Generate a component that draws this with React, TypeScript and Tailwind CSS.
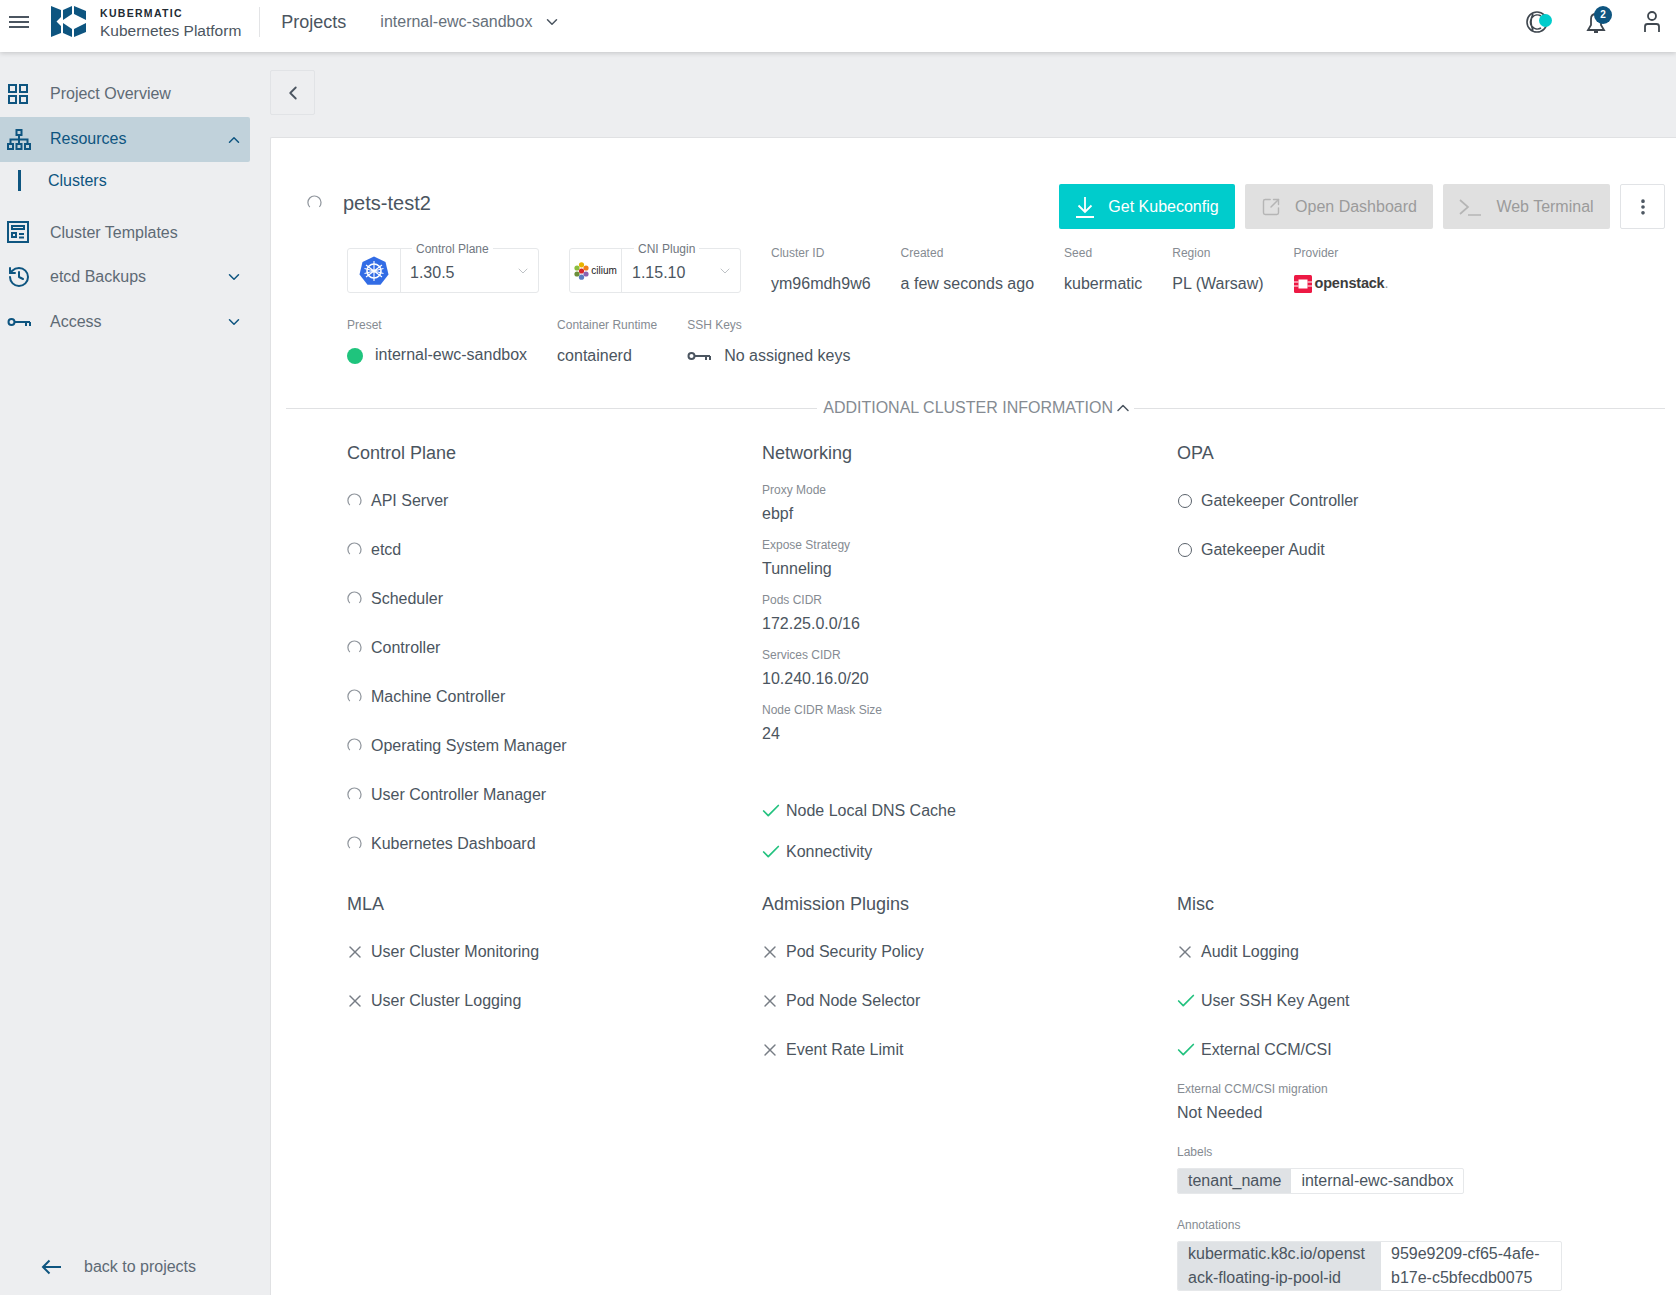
import React from 'react';
import { ChevronDown, ChevronLeft, ChevronUp, Check, EllipsisVertical, History, SquareArrowOutUpRight, X } from 'lucide-react';

const Spinner: React.FC<{ size?: number }> = ({ size = 16 }) => (
  <svg width={size} height={size} viewBox="0 0 16 16" fill="none" className="shrink-0">
    <path d="M3 13A7 7 0 1 1 13.2 12.7" stroke="#8f959c" strokeWidth="1.3" />
  </svg>
);

const Logo = () => (
  <svg width="36" height="31" viewBox="0 0 36 31" fill="#0e5580" className="shrink-0">
    <path d="M0 0L10 4V11L5.5 15.5L10 20V27L0 31Z" />
    <path d="M12 4L21 0V8L12 14Z" />
    <path d="M23 0L35 5V14L23 8Z" />
    <path d="M12 17L21 23V31L12 27Z" />
    <path d="M23 23L35 17V26L23 31Z" />
  </svg>
);

const GridIcon = () => (
  <svg width="22" height="22" viewBox="0 0 22 22" fill="none" stroke="#0e5580" strokeWidth="2">
    <rect x="2" y="2" width="7" height="7" />
    <rect x="13" y="2" width="7" height="7" />
    <rect x="2" y="13" width="7" height="7" />
    <rect x="13" y="13" width="7" height="7" />
  </svg>
);

const TreeIcon = () => (
  <svg width="24" height="22" viewBox="0 0 24 22" fill="none" stroke="#0e5580" strokeWidth="2">
    <rect x="9.5" y="1" width="5" height="5" />
    <rect x="1" y="15" width="5" height="5" />
    <rect x="9.5" y="15" width="5" height="5" />
    <rect x="18" y="15" width="5" height="5" />
    <path d="M12 6V15M3.5 15V10.5H20.5V15" />
  </svg>
);

const TemplateIcon = () => (
  <svg width="22" height="22" viewBox="0 0 22 22" fill="none" stroke="#0e5580" strokeWidth="2">
    <rect x="1" y="1" width="20" height="20" />
    <rect x="5" y="5" width="12" height="3" />
    <rect x="5" y="12" width="4" height="4" />
    <path d="M12 13H17M12 16.5H17" />
  </svg>
);

const KeyIcon: React.FC<{ color?: string }> = ({ color = '#0e5580' }) => (
  <svg width="24" height="10" viewBox="0 0 24 10" fill="none" stroke={color} strokeWidth="2">
    <circle cx="4.5" cy="5" r="3" />
    <path d="M7.5 5H23M19 5V9M23 5V9" />
  </svg>
);

const KubernetesLogo = () => (
  <svg width="30" height="30" viewBox="0 0 30 30" className="shrink-0">
    <path d="M15 0.5L26.5 6L29.5 18.5L21.5 28.8H8.5L0.5 18.5L3.5 6Z" fill="#326ce5" />
    <g fill="none" stroke="#fff">
      <circle cx="15" cy="15" r="7" strokeWidth="1.6" />
      <circle cx="15" cy="15" r="1.6" fill="#fff" strokeWidth="0" />
      <path d="M15 5V25M7 9L23 21M23 9L7 21M5.5 17.5L24.5 12.5M24.5 17.5L5.5 12.5" strokeWidth="1.1" />
    </g>
  </svg>
);

const CiliumLogo = () => (
  <div className="flex items-center gap-[2px]">
    <svg width="15" height="18" viewBox="0 0 15 18">
      <circle cx="7.5" cy="2.8" r="2.6" fill="#e8b400" />
      <circle cx="3" cy="6" r="2.6" fill="#8bbd3e" />
      <circle cx="12" cy="6" r="2.6" fill="#f07d1a" />
      <circle cx="7.5" cy="9" r="2.6" fill="#d7262c" />
      <circle cx="3" cy="12" r="2.6" fill="#6b8f3a" />
      <circle cx="12" cy="12" r="2.6" fill="#8a63b0" />
      <circle cx="7.5" cy="15.2" r="2.6" fill="#5a7cc0" />
    </svg>
    <span className="text-[10px] text-[#222]">cilium</span>
  </div>
);

const OpenstackMark = () => (
  <svg width="18" height="18" viewBox="0 0 18 18" className="shrink-0">
    <rect width="18" height="18" rx="1.5" fill="#ed1944" />
    <rect x="4.5" y="4.5" width="9" height="9" fill="#fff" />
    <path d="M0 7H4.5M0 11H4.5M13.5 7H18M13.5 11H18" stroke="#fff" strokeWidth="1" />
  </svg>
);

const Label: React.FC<{ children: React.ReactNode }> = ({ children }) => (
  <div className="h-4 text-xs leading-4 text-[#858b92] whitespace-nowrap">{children}</div>
);

const Value: React.FC<{ children: React.ReactNode }> = ({ children }) => (
  <div className="h-6 leading-6 whitespace-nowrap">{children}</div>
);

const NavItem: React.FC<{ icon: React.ReactNode; label: string; expand?: 'up' | 'down'; active?: boolean; className?: string; labelClass?: string }> = ({ icon, label, expand, active, className, labelClass }) => (
  <div className={`flex h-[45px] w-[250px] items-center rounded-r-[2px] pl-[7px] pr-[7px] ${active ? 'bg-[#c1d2db] text-[#0e5580]' : 'text-[#5e6a75]'} ${className ?? ''}`}>
    <div className="flex w-[43px] shrink-0 items-center">{icon}</div>
    <span className={labelClass}>{label}</span>
    {expand === 'up' && <ChevronUp size={18} color="#0e5580" className="ml-auto" />}
    {expand === 'down' && <ChevronDown size={18} color="#0e5580" className="ml-auto" />}
  </div>
);

const StatusRow: React.FC<{ kind: 'spin' | 'ok' | 'off' | 'ring'; label: string; rowClass?: string }> = ({ kind, label, rowClass = 'h-[49px]' }) => (
  <div className={`flex items-center ${rowClass}`}>
    <div className="flex w-6 shrink-0 items-center">
      {kind === 'spin' && <Spinner size={15} />}
      {kind === 'ok' && <Check size={22} color="#23c27f" strokeWidth={1.9} className="-ml-[2px] shrink-0" />}
      {kind === 'off' && <X size={20} color="#777d85" strokeWidth={1.7} className="-ml-[2px] shrink-0" />}
      {kind === 'ring' && <div className="ml-px h-[14px] w-[14px] rounded-full border-[1.5px] border-[#5a626b]" />}
    </div>
    <span className="whitespace-nowrap">{label}</span>
  </div>
);

const Heading: React.FC<{ children: React.ReactNode }> = ({ children }) => (
  <h3 className="mb-[11px] h-6 text-lg leading-6">{children}</h3>
);

const CONTROL_PLANE = ['API Server', 'etcd', 'Scheduler', 'Controller', 'Machine Controller', 'Operating System Manager', 'User Controller Manager', 'Kubernetes Dashboard'];

const NETWORKING = [
  ['Proxy Mode', 'ebpf'],
  ['Expose Strategy', 'Tunneling'],
  ['Pods CIDR', '172.25.0.0/16'],
  ['Services CIDR', '10.240.16.0/20'],
  ['Node CIDR Mask Size', '24'],
];

export default function App() {
  return (
    <div className="flex h-[1295px] flex-col overflow-hidden bg-[#edeef0] text-base text-[#4b5560] [font-family:'Liberation_Sans',Arial,sans-serif]">
      <header className="relative z-10 flex h-[52px] shrink-0 items-center bg-white pb-[9px] pl-[9px] pr-[15px] shadow-[0_1px_5px_rgba(0,0,0,0.18)]">
        <svg width="20" height="12" viewBox="0 0 20 12" fill="#4b5560" className="shrink-0">
          <rect width="20" height="2" />
          <rect y="5" width="20" height="2" />
          <rect y="10" width="20" height="2" />
        </svg>
        <div className="ml-[22px]"><Logo /></div>
        <div className="ml-[13px] mt-[4px] flex flex-col">
          <span className="text-[10.5px] font-bold leading-[12px] tracking-[1.3px] text-[#222b33]">KUBERMATIC</span>
          <span className="mt-[2px] text-[15.5px] leading-5">Kubernetes Platform</span>
        </div>
        <div className="ml-[18px] h-[30px] w-px bg-[#e3e4e6]" />
        <span className="ml-[21px] text-lg">Projects</span>
        <span className="ml-[34px] text-[#66707a]">internal-ewc-sandbox</span>
        <ChevronDown size={18} color="#4b5560" className="ml-[11px]" />
        <div className="ml-auto flex items-center">
          <div className="relative h-6 w-[26px]">
            <svg width="24" height="24" viewBox="0 0 24 24" fill="none" stroke="#3f474f" strokeWidth="1.6">
              <circle cx="11" cy="12" r="10" />
              <path d="M15 6A7 7 0 1 0 15 18M7 3.5C4.5 9 4.5 15 7 20.5" />
            </svg>
            <div className="absolute right-0 top-[4px] h-[13px] w-[13px] rounded-full bg-[#00cccc]" />
          </div>
          <div className="relative ml-[33px] h-6 w-[22px]">
            <svg width="22" height="24" viewBox="0 0 22 24" fill="none" stroke="#3f474f" strokeWidth="1.8">
              <path d="M6 9C6 6 8 4 11 4S16 6 16 9V15L19 20H3L6 15ZM9 22H13" />
            </svg>
            <div className="absolute -right-[5px] -top-[4px] flex h-[18px] w-[18px] items-center justify-center rounded-full bg-[#0e5580] text-[10px] font-bold text-white">2</div>
          </div>
          <svg width="18" height="24" viewBox="0 0 18 24" fill="none" stroke="#3f474f" strokeWidth="1.8" className="ml-[36px]">
            <circle cx="9" cy="6" r="4" />
            <path d="M2 22V16.5C2 15 3 14 4.5 14H13.5C15 14 16 15 16 16.5V22" />
          </svg>
        </div>
      </header>

      <div className="flex min-h-0 flex-1">
        <aside className="flex w-[270px] shrink-0 flex-col pt-[19px]">
          <NavItem icon={<GridIcon />} label="Project Overview" />
          <NavItem icon={<TreeIcon />} label="Resources" expand="up" active className="mt-px" labelClass="mb-[2px]" />
          <div className="flex h-9 items-center text-[#0e5580]">
            <div className="ml-[18px] h-[21px] w-[3px] bg-[#0e5580]" />
            <span className="ml-[27px] mt-[2px]">Clusters</span>
          </div>
          <NavItem icon={<TemplateIcon />} label="Cluster Templates" className="mt-[11px]" labelClass="mt-[2px]" />
          <NavItem icon={<History size={24} color="#0e5580" strokeWidth={2} />} label="etcd Backups" expand="down" />
          <NavItem icon={<KeyIcon />} label="Access" expand="down" />
          <div className="mb-[17px] mt-auto flex h-[22px] items-center pl-[41px] text-[#5e6a75]">
            <svg width="20" height="16" viewBox="0 0 20 16" fill="none" stroke="#0e5580" strokeWidth="2" className="shrink-0">
              <path d="M20 8H2M8.5 1.5L2 8L8.5 14.5" />
            </svg>
            <span className="ml-[23px]">back to projects</span>
          </div>
        </aside>

        <main className="flex min-w-0 flex-1 flex-col pt-[18px]">
          <button className="flex h-[45px] w-[45px] items-center justify-center rounded-[2px] border border-[#e1e3e6]">
            <ChevronLeft size={22} color="#4b5560" />
          </button>
          <section className="mt-[22px] flex-1 rounded-tl-[2px] border-l border-t border-[#e0e1e3] bg-white pl-[15px] pr-[11px] pt-[46px]">
            <div className="pl-[61px]">
              <div className="flex h-[45px] items-center">
                <div className="-ml-[40px] mb-[8px] w-[40px]"><Spinner size={15} /></div>
                <h1 className="-ml-[4px] mb-[8px] text-xl">pets-test2</h1>
                <div className="ml-auto flex items-center gap-[10px]">
                  <button className="flex h-[45px] w-[176px] items-center justify-center gap-[13px] rounded-[2px] bg-[#00cccc] text-white">
                    <svg width="20" height="22" viewBox="0 0 20 22" fill="none" stroke="#fff" strokeWidth="1.8">
                      <path d="M10 1V15.5M3.5 9.5L10 16L16.5 9.5M1 21H19" />
                    </svg>
                    Get Kubeconfig
                  </button>
                  <button className="flex h-[45px] w-[188px] items-center justify-center gap-[14px] rounded-[2px] bg-[#e0e0e0] text-[#9b9b9b]">
                    <SquareArrowOutUpRight size={20} color="#b5b5b5" strokeWidth={1.7} />
                    Open Dashboard
                  </button>
                  <button className="flex h-[45px] w-[167px] items-center justify-center gap-[15px] rounded-[2px] bg-[#e0e0e0] text-[#9b9b9b]">
                    <svg width="22" height="20" viewBox="0 0 22 20" fill="none" stroke="#b5b5b5" strokeWidth="1.7">
                      <path d="M1 3L9 10L1 17M9 18H22" />
                    </svg>
                    Web Terminal
                  </button>
                  <button className="flex h-[45px] w-[45px] items-center justify-center rounded-[2px] border border-[#e1e3e6]">
                    <EllipsisVertical size={20} color="#4b5560" strokeWidth={2.4} />
                  </button>
                </div>
              </div>

              <div className="mt-[19px] flex h-[45px] gap-[30px]">
                <div className="relative -mr-px flex w-[192px] rounded-[3px] border border-[#e6e8ea]">
                  <span className="absolute -top-[8px] left-[64px] bg-white px-1 text-xs leading-4 text-[#707780]">Control Plane</span>
                  <div className="flex w-[53px] items-center justify-center border-r border-[#e6e8ea]"><KubernetesLogo /></div>
                  <span className="ml-[9px] mt-[5px] self-center">1.30.5</span>
                  <ChevronDown size={16} color="#b9bdc2" strokeWidth={1.4} className="ml-auto mr-[7px] self-center" />
                </div>
                <div className="relative ml-px flex w-[172px] rounded-[3px] border border-[#e6e8ea]">
                  <span className="absolute -top-[8px] left-[64px] bg-white px-1 text-xs leading-4 text-[#707780]">CNI Plugin</span>
                  <div className="flex w-[52px] items-center justify-center border-r border-[#e6e8ea]"><CiliumLogo /></div>
                  <span className="ml-[10px] mt-[5px] self-center">1.15.10</span>
                  <ChevronDown size={16} color="#b9bdc2" strokeWidth={1.4} className="ml-auto mr-[7px] self-center" />
                </div>
                {[
                  ['Cluster ID', 'ym96mdh9w6'],
                  ['Created', 'a few seconds ago'],
                  ['Seed', 'kubermatic'],
                  ['Region', 'PL (Warsaw)'],
                ].map(([k, v]) => (
                  <div key={k} className="-mt-[3px]">
                    <Label>{k}</Label>
                    <div className="mt-[11px]"><Value>{v}</Value></div>
                  </div>
                ))}
                <div className="-mt-[3px]">
                  <Label>Provider</Label>
                  <div className="mt-[11px] flex h-6 items-center gap-[3px]">
                    <OpenstackMark />
                    <span className="text-[14.5px] font-bold tracking-[-0.2px] text-[#3d3d3d]">openstack<span className="font-normal text-[#999]">.</span></span>
                  </div>
                </div>
              </div>

              <div className="mt-[24px] flex gap-[30px]">
                <div>
                  <Label>Preset</Label>
                  <div className="mt-[11px] flex h-6 items-center">
                    <div className="h-4 w-4 rounded-full bg-[#1fc47d]" />
                    <span className="-mt-[2px] ml-[12px]">internal-ewc-sandbox</span>
                  </div>
                </div>
                <div>
                  <Label>Container Runtime</Label>
                  <div className="mt-[11px]"><Value>containerd</Value></div>
                </div>
                <div>
                  <Label>SSH Keys</Label>
                  <div className="mt-[11px] flex h-6 items-center gap-[13px]">
                    <KeyIcon color="#4b5560" />
                    <span>No assigned keys</span>
                  </div>
                </div>
              </div>
            </div>

            <div className="mt-[28px] flex h-6 items-center">
              <div className="h-px flex-1 bg-[#e0e1e3]" />
              <span className="ml-[6px] uppercase text-[#858b92]">Additional cluster information</span>
              <ChevronUp size={20} color="#4b5560" strokeWidth={1.8} className="mr-px" />
              <div className="h-px w-[531px] bg-[#e0e1e3]" />
            </div>

            <div className="mt-[21px] grid grid-cols-[415px_415px_1fr] grid-rows-[427px_auto] gap-y-[24px] pl-[61px]">
              <div>
                <Heading>Control Plane</Heading>
                {CONTROL_PLANE.map((name) => <StatusRow key={name} kind="spin" label={name} />)}
              </div>
              <div>
                <Heading>Networking</Heading>
                <div className="pt-[6px]">
                  {NETWORKING.map(([k, v]) => (
                    <div key={k} className="mb-[11px]">
                      <Label>{k}</Label>
                      <div className="mt-1"><Value>{v}</Value></div>
                    </div>
                  ))}
                </div>
                <div className="mt-[44px]">
                  <StatusRow kind="ok" label="Node Local DNS Cache" rowClass="h-[41px]" />
                  <StatusRow kind="ok" label="Konnectivity" rowClass="h-[41px]" />
                </div>
              </div>
              <div>
                <Heading>OPA</Heading>
                <StatusRow kind="ring" label="Gatekeeper Controller" />
                <StatusRow kind="ring" label="Gatekeeper Audit" />
              </div>
              <div>
                <Heading>MLA</Heading>
                <StatusRow kind="off" label="User Cluster Monitoring" />
                <StatusRow kind="off" label="User Cluster Logging" />
              </div>
              <div>
                <Heading>Admission Plugins</Heading>
                <StatusRow kind="off" label="Pod Security Policy" />
                <StatusRow kind="off" label="Pod Node Selector" />
                <StatusRow kind="off" label="Event Rate Limit" />
              </div>
              <div>
                <Heading>Misc</Heading>
                <StatusRow kind="off" label="Audit Logging" />
                <StatusRow kind="ok" label="User SSH Key Agent" />
                <StatusRow kind="ok" label="External CCM/CSI" />
                <div className="mt-[7px]"><Label>External CCM/CSI migration</Label></div>
                <div className="mt-1"><Value>Not Needed</Value></div>
                <div className="mt-[19px]"><Label>Labels</Label></div>
                <div className="mt-[8px] flex h-[26px] w-fit overflow-hidden rounded-[2px] border border-[#e6e8ea] leading-6">
                  <span className="bg-[#dfe2e5] px-[10px]">tenant_name</span>
                  <span className="px-[10px]">internal-ewc-sandbox</span>
                </div>
                <div className="mt-[23px]"><Label>Annotations</Label></div>
                <div className="mt-[8px] flex w-[385px] overflow-hidden rounded-[2px] border border-[#e6e8ea] leading-6">
                  <span className="w-[203px] shrink-0 break-all bg-[#dfe2e5] px-[10px]">kubermatic.k8c.io/openstack-floating-ip-pool-id</span>
                  <span className="px-[10px]">959e9209-cf65-4afe-b17e-c5bfecdb0075</span>
                </div>
              </div>
            </div>
          </section>
        </main>
      </div>
    </div>
  );
}
